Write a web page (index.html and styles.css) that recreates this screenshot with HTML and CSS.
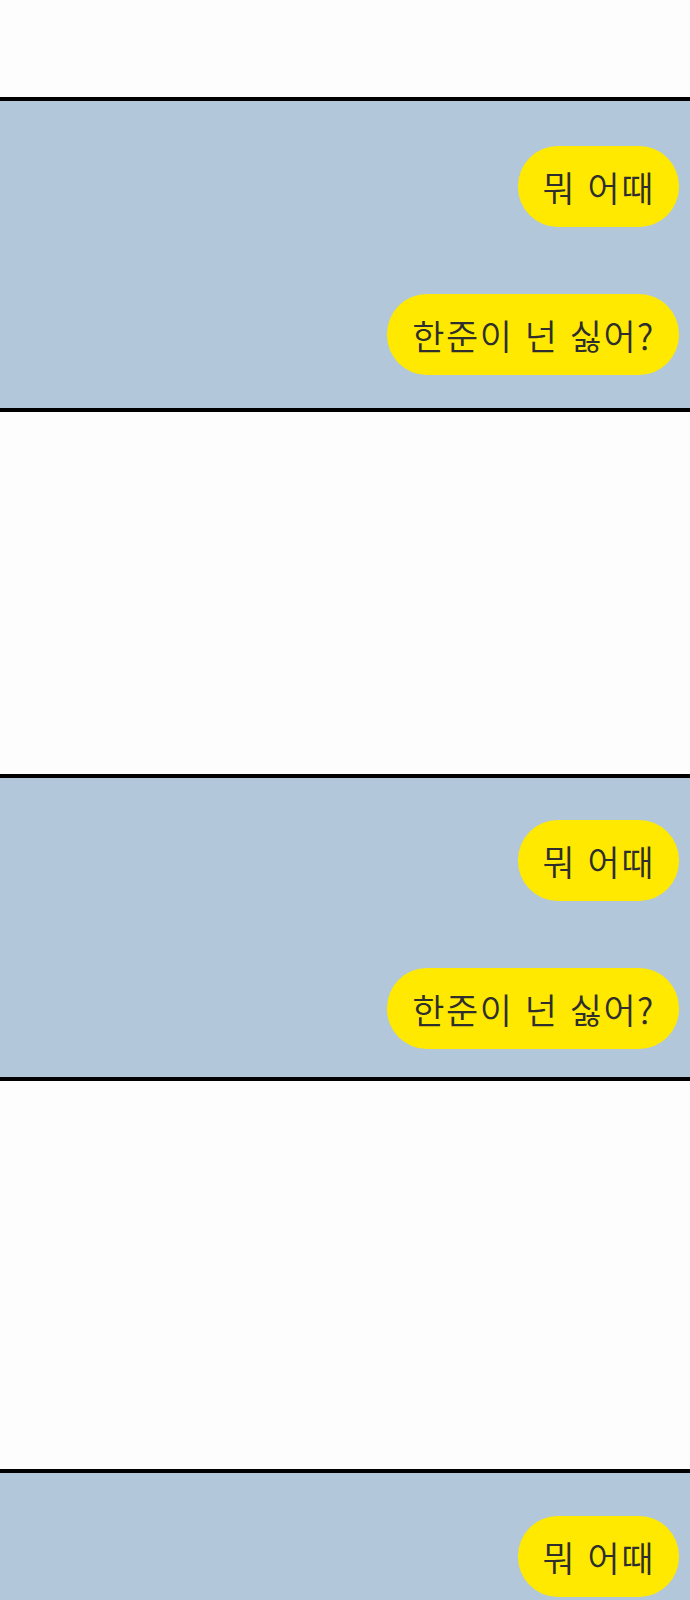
FILE: index.html
```html
<!DOCTYPE html>
<html lang="ko">
  <head>
    <meta charset="UTF-8" />
    <meta name="viewport" content="width=device-width, initial-scale=1.0" />
    <title>뭐 어때</title>
    <link rel="stylesheet" href="styles.css">
  </head>
  <body>
    <!-- 컷 1 -->
    <div class="panel panel-first">
      <div class="bubble">뭐 어때</div>
      <div class="bubble">한준이 넌 싫어?</div>
    </div>

    <!-- 컷 2 -->
    <div class="panel panel-second">
      <div class="bubble">뭐 어때</div>
      <div class="bubble">한준이 넌 싫어?</div>
    </div>

    <!-- 컷 3 -->
    <div class="panel panel-third">
      <div class="bubble">뭐 어때</div>
    </div>
  </body>
</html>
```

FILE: styles.css
```css
body {
  margin: 0;
  background: #fdfdfd;
  font-family: 'Noto Sans CJK KR', 'Noto Sans', sans-serif;
  overflow: hidden;
}
.panel {
  display: flex;
  flex-direction: column;
  align-items: flex-end;
  gap: 67px;
  padding: 45px 11px 33px;
  background-color: #b2c7da;
  border-top: 4px solid #000;
  border-bottom: 4px solid #000;
}
.panel-first {
  margin-top: 97px;
}
.panel-second {
  margin-top: 362px;
  padding-top: 42px;
  padding-bottom: 28px;
}
.panel-third {
  margin-top: 388px;
  padding-top: 43px;
}
.bubble {
  padding: 18px 24px 18px 25px;
  line-height: 45px;
  font-size: 35px;
  font-weight: 350;
  letter-spacing: 1.5px;
  color: #2e2e2e;
  background-color: #ffe900;
  border-radius: 40px;
  white-space: nowrap;
}
```
